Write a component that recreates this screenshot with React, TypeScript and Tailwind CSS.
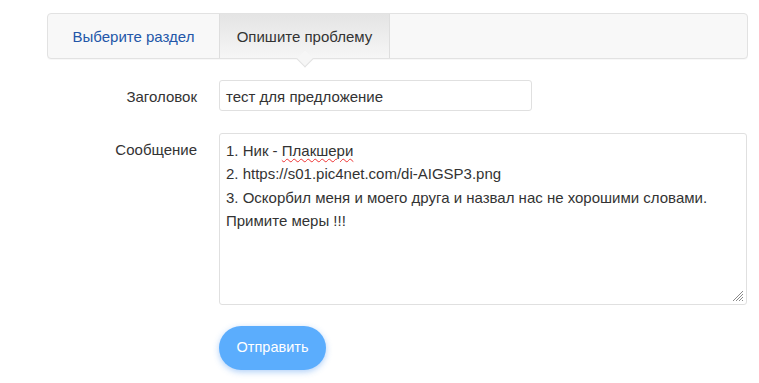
export default function App() {
  const font = { fontFamily: '"Liberation Sans", Arial, sans-serif' };

  return (
    <div className="min-h-[383px] w-[759px] bg-white text-[15px] text-[#333]" style={font}>
      <div className="ml-[47px] w-[701px] pt-[13px]">
        <div className="flex h-[46px] rounded-[4px] border border-[#e2e2e2] bg-[#f8f8f8] shadow-[0_1px_1px_rgba(0,0,0,0.03)]">
          <div className="flex h-[44px] w-[171px] items-center justify-center pt-[3px] text-[#2356a8]">
            Выберите раздел
          </div>
          <div className="relative flex h-[44px] w-[171px] items-center justify-center border-x border-[#dedede] bg-linear-to-b from-[#e4e4e4] to-[#f6f6f6] pt-[3px] text-[#333]">
            Опишите проблему
            <span className="absolute bottom-[-7px] left-1/2 h-[12px] w-[12px] -translate-x-1/2 rotate-45 border-r border-b border-[#e2e2e2] bg-[#f6f6f6]" />
          </div>
        </div>

        <div className="mt-[21px] flex items-center">
          <label className="w-[150px] pt-[3px] text-right">Заголовок</label>
          <div className="ml-[22px] flex h-[31px] w-[313px] items-center rounded-[3px] border border-[#e0e0e0] px-[6px] pt-[3px]">
            тест для предложение
          </div>
        </div>

        <div className="mt-[22px] flex items-start">
          <label className="w-[150px] pt-[6px] text-right">Сообщение</label>
          <div className="relative ml-[22px] h-[172px] w-[528px] rounded-[3px] border border-[#e0e0e0] pl-[6px] pr-[10px] pt-[5px] leading-[23.3px]">
            <div>
              1. Ник -{" "}
              <span className="underline decoration-[#e33] decoration-wavy decoration-1 underline-offset-[2px]">
                Плакшери
              </span>
            </div>
            <div>2. https://s01.pic4net.com/di-AIGSP3.png</div>
            <div>3. Оскорбил меня и моего друга и назвал нас не хорошими словами. Примите меры !!!</div>
            <svg
              className="absolute right-[2px] bottom-[2px]"
              width="12"
              height="12"
              viewBox="0 0 12 12"
              fill="none"
              stroke="#8a8a8a"
              strokeWidth="1"
            >
              <line x1="11" y1="1" x2="1" y2="11" />
              <line x1="11" y1="4" x2="4" y2="11" />
              <line x1="11" y1="7" x2="7" y2="11" />
              <line x1="11" y1="10" x2="10" y2="11" />
            </svg>
          </div>
        </div>

        <div className="mt-[21px] ml-[172px]">
          <button className="h-[44px] w-[107px] rounded-full bg-[#5badfd] text-[14.5px] text-white shadow-[0_2px_6px_rgba(80,150,240,0.45)]">
            Отправить
          </button>
        </div>
      </div>
    </div>
  );
}
